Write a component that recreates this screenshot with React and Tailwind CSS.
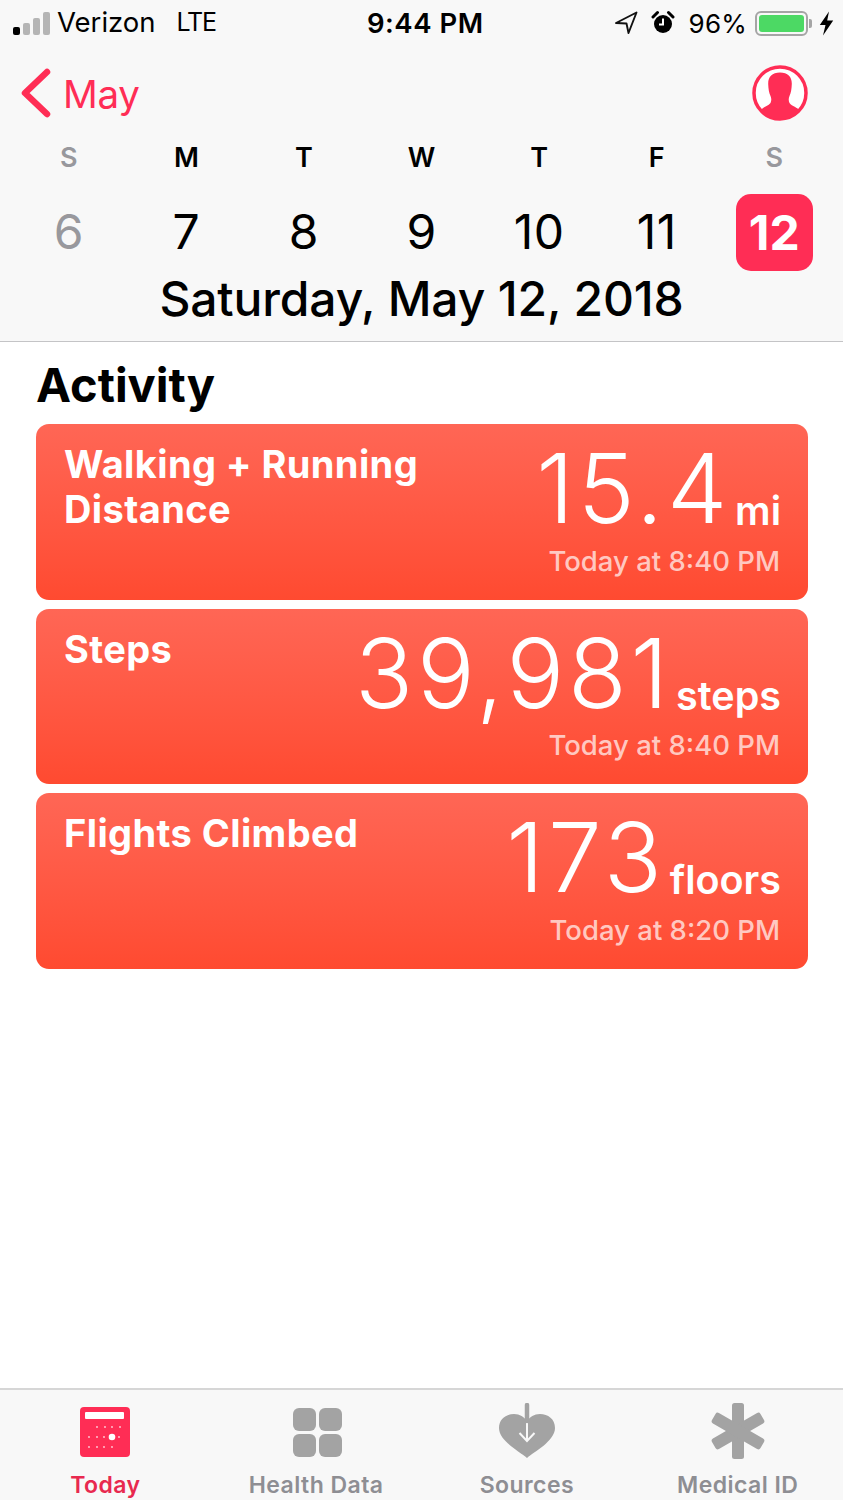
const F = { fontFamily: '"Inter", "Liberation Sans", sans-serif' };

function Signal() {
  const bars = [
    ['h-[8px]', 'bg-black'],
    ['h-[12px]', 'bg-[#b5b5b5]'],
    ['h-[17px]', 'bg-[#b5b5b5]'],
    ['h-[23px]', 'bg-[#b5b5b5]'],
  ];
  return (
    <div className="flex items-end gap-[3px] h-[23px]">
      {bars.map(([h, c], i) => (
        <div key={i} className={`w-[7px] rounded-[2px] ${h} ${c}`} />
      ))}
    </div>
  );
}

function StatusBar() {
  return (
    <div className="relative h-[46px] shrink-0 flex items-center pl-[13px] pr-[9px] text-black">
      <Signal />
      <span className="ml-[7px] text-[27.5px] font-normal tracking-[0px]">Verizon</span>
      <span className="ml-[21px] text-[25px] tracking-[-1.2px]">LTE</span>
      <span className="absolute left-[367px] top-[5px] text-[27.5px] leading-[36px] font-semibold tracking-[0.5px]">9:44 PM</span>
      <div className="ml-auto flex items-center">
        <svg width="24" height="26" viewBox="0 0 24 26">
          <path d="M2 13 L22.5 2.5 L14.5 23 L12.5 13.5 Z" fill="none" stroke="#111" strokeWidth="1.9" strokeLinejoin="round" />
        </svg>
        <svg className="ml-[13px]" width="24" height="26" viewBox="0 0 24 26">
          <circle cx="12" cy="14" r="9" fill="#000" />
          <path d="M2 7 L6.5 2.5 M22 7 L17.5 2.5" stroke="#000" strokeWidth="3" strokeLinecap="round" />
          <path d="M12 8.5 V14.5 H8" stroke="#fff" strokeWidth="2" fill="none" />
        </svg>
        <span className="ml-[14px] text-[26px] tracking-[0.2px]">96%</span>
        <div className="ml-[8px] w-[53px] h-[25px] rounded-[6px] border-2 border-[#a5a5a5] p-[2px]">
          <div className="w-full h-full rounded-[3px] bg-[#4cd964]" />
        </div>
        <div className="ml-[1px] w-[3px] h-[9px] rounded-r-[2px] bg-[#a5a5a5]" />
        <svg className="ml-[7px]" width="15" height="25" viewBox="0 0 15 25">
          <path d="M10 0.5 L0.8 14 H6.5 L4 24.5 L14.2 9.5 H8.2 Z" fill="#000" />
        </svg>
      </div>
    </div>
  );
}

function Profile() {
  return (
    <svg width="56" height="56" viewBox="0 0 56 56">
      <circle cx="28" cy="28" r="26" fill="#fff" stroke="#ff2d55" strokeWidth="3.5" />
      <path d="M28 7.5 C20 7.5 16 12 16.2 19 C16.4 24 17 28 18.5 31 C19.5 33 19.6 36 18.5 38 C16 41.5 10.5 42 8 46 C13 51 20 54 28 54 C36 54 43 51 48 46 C45.5 42 40 41.5 37.5 38 C36.4 36 36.5 33 37.5 31 C39 28 39.6 24 39.8 19 C40 12 36 7.5 28 7.5 Z" fill="#ff2d55" />
    </svg>
  );
}

function Nav() {
  return (
    <div className="h-[94px] shrink-0 flex items-center pl-[20px] pr-[35px]">
      <svg width="32" height="50" viewBox="0 0 32 50">
        <path d="M27 4 L5 25 L27 46" fill="none" stroke="#ff2d55" strokeWidth="6.5" strokeLinecap="round" strokeLinejoin="round" />
      </svg>
      <span className="ml-[11px] pt-[2px] text-[38.5px] leading-[44px] text-[#ff2d55] tracking-[-0.3px]">May</span>
      <div className="ml-auto"><Profile /></div>
    </div>
  );
}

function Calendar() {
  const days = [
    ['S', '6', true], ['M', '7'], ['T', '8'], ['W', '9'], ['T', '10'], ['F', '11'], ['S', '12', true],
  ];
  return (
    <div className="grid grid-cols-7 px-[10px]">
      {days.map(([w, d, muted], i) => (
        <div key={i} className="flex flex-col items-center">
          <span className={`h-[32px] mt-[2px] text-[27px] leading-[32px] font-semibold ${muted ? 'text-[#98989d]' : 'text-black'}`}>{w}</span>
          {i === 6 ? (
            <div className="mt-[20px] w-[77px] h-[77px] rounded-[15px] bg-[#ff2d55] flex items-center justify-center text-white text-[48px] font-bold tracking-[0px]">{d}</div>
          ) : (
            <div className={`mt-[20px] h-[77px] pb-[2px] flex items-center text-[48px] font-normal tracking-[0.4px] ${muted ? 'text-[#98989d]' : 'text-black'}`}>{d}</div>
          )}
        </div>
      ))}
    </div>
  );
}

function Card({ title, value, unit, time }) {
  return (
    <div className="h-[175.5px] rounded-[13px] bg-gradient-to-b from-[#ff6655] to-[#ff4a30] text-white pl-[28px] pr-[27px] pt-[16px] pb-[23px] flex justify-between">
      <div className="mt-[2px] w-[400px] text-[38px] leading-[45px] font-bold tracking-[0.4px] whitespace-pre-line">{title}</div>
      <div className="flex flex-col items-end">
        <div className="flex items-baseline h-[104px]">
          <span className="text-[96px] leading-[96px] font-light tracking-[3.8px]">{value}</span>
          <span className="relative top-[2px] ml-[4px] text-[39.5px] font-semibold">{unit}</span>
        </div>
        <div className="mt-auto mr-[1px] text-[27.5px] leading-[32px] font-medium text-white/70 tracking-[0px]">{time}</div>
      </div>
    </div>
  );
}

function TabIcon({ name }) {
  if (name === 'today') {
    const small = [
      [17, 20], [25, 20], [32, 20], [40, 20],
      [9, 30], [17, 30], [24, 30], [39, 30],
      [9, 40], [17, 40], [24, 40], [32, 40],
    ];
    return (
      <svg width="50" height="50" viewBox="0 0 50 50" className="block">
        <rect x="0" y="0" width="50" height="50" rx="4" fill="#ff2d55" />
        <rect x="5" y="5" width="39" height="7" rx="1" fill="#fff" />
        {small.map(([x, y]) => <circle key={x + '-' + y} cx={x} cy={y} r="0.9" fill="#ffd0da" />)}
        <circle cx="32" cy="30" r="3.3" fill="#fff" />
      </svg>
    );
  }
  if (name === 'data') {
    return (
      <div className="grid grid-cols-2 gap-[3px] w-[49px] h-[49px]">
        {[0, 1, 2, 3].map((i) => <div key={i} className="rounded-[6px] bg-[#a3a3a3]" />)}
      </div>
    );
  }
  if (name === 'sources') {
    return (
      <svg width="58" height="56" viewBox="0 0 58 56" className="block">
        <path d="M29 55 C22 49 1 38 1 25 C1 16 8 11 16 11 C22 11 26 14 29 18 C32 14 36 11 42 11 C50 11 57 16 57 25 C57 38 36 49 29 55 Z" fill="#a3a3a3" />
        <path d="M29 19 V38 M21.5 30 L29 38 L36.5 30" stroke="#f8f8f8" strokeWidth="2" fill="none" />
        <path d="M29 2 V18" stroke="#a3a3a3" strokeWidth="4.5" strokeLinecap="round" />
      </svg>
    );
  }
  return (
    <svg width="54" height="56" viewBox="0 0 54 56" className="block">
      <g fill="#a3a3a3">
        <rect x="21" y="0" width="12" height="56" rx="2.5" />
        <rect x="21" y="0" width="12" height="56" rx="2.5" transform="rotate(60 27 28)" />
        <rect x="21" y="0" width="12" height="56" rx="2.5" transform="rotate(-60 27 28)" />
      </g>
    </svg>
  );
}

function Tab({ name, label, active, cls }) {
  return (
    <div className="relative flex flex-col items-center">
      <div className={`h-[58px] flex items-center justify-center ${cls}`}>
        <TabIcon name={name} />
      </div>
      <span className={`absolute top-[69px] whitespace-nowrap text-[23px] leading-[28px] font-semibold tracking-[0.45px] ${active ? 'text-[#e8294f]' : 'text-[#8e8e93]'}`}>{label}</span>
    </div>
  );
}

export default function App() {
  return (
    <div style={F} className="w-[843px] h-[1500px] overflow-hidden bg-white flex flex-col">
      <header className="h-[342px] shrink-0 bg-[#f8f8f8] border-b border-[#c4c4c6] relative">
        <StatusBar />
        <Nav />
        <Calendar />
        <div className="absolute left-0 right-0 top-[271px] text-center text-[48px] leading-[56px] font-medium tracking-[-0.15px] text-black">Saturday, May 12, 2018</div>
      </header>
      <main className="flex-1 px-[36px] pr-[35px]">
        <h1 className="mt-[13px] h-[69px] text-[47px] leading-[60px] font-bold tracking-[0px] text-black">Activity</h1>
        <div className="flex flex-col gap-[9px]">
          <Card title={'Walking + Running\nDistance'} value="15.4" unit="mi" time="Today at 8:40 PM" />
          <Card title="Steps" value="39,981" unit="steps" time="Today at 8:40 PM" />
          <Card title="Flights Climbed" value="173" unit="floors" time="Today at 8:20 PM" />
        </div>
      </main>
      <footer className="h-[112px] shrink-0 bg-[#f8f8f8] border-t-2 border-[#d6d6d6] grid grid-cols-4 pt-[12px]">
        <Tab name="today" label="Today" active cls="pt-[2px]" />
        <Tab name="data" label="Health Data" cls="pt-[2px] pl-[2px]" />
        <Tab name="sources" label="Sources" cls="" />
        <Tab name="medical" label="Medical ID" cls="" />
      </footer>
    </div>
  );
}
